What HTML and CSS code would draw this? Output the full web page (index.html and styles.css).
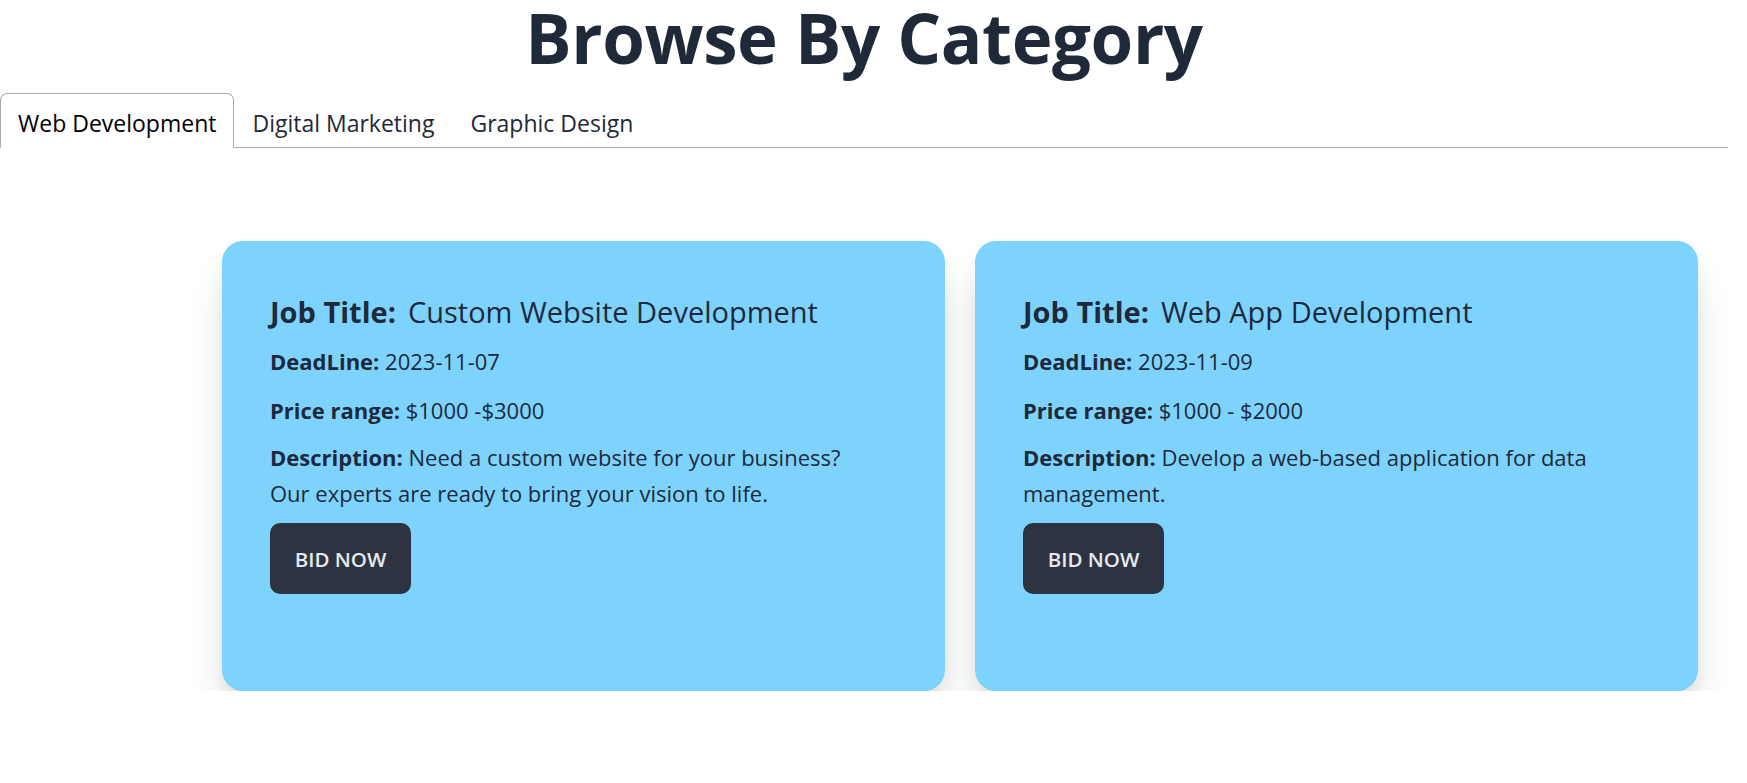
FILE: index.html
```html
<!DOCTYPE html>
<html lang="en">
<head>
<meta charset="utf-8">
<title>Browse By Category</title>
<link rel="stylesheet" href="styles.css">
</head>
<body>
<div class="page">
  <h1 class="heading">Browse By Category</h1>
  <ul class="tab-list">
    <li class="tab tab-active">Web Development</li>
    <li class="tab">Digital Marketing</li>
    <li class="tab">Graphic Design</li>
  </ul>
  <div class="cards">
    <div class="card">
      <h2 class="job-title"><span class="label">Job Title:</span><span class="job-name">Custom Website Development</span></h2>
      <p class="line"><span class="label">DeadLine:</span> 2023-11-07</p>
      <p class="line"><span class="label">Price range:</span> $1000 -$3000</p>
      <p class="line desc"><span class="label">Description:</span> Need a custom website for your business? Our experts are ready to bring your vision to life.</p>
      <button class="btn">BID NOW</button>
    </div>
    <div class="card">
      <h2 class="job-title"><span class="label">Job Title:</span><span class="job-name">Web App Development</span></h2>
      <p class="line"><span class="label">DeadLine:</span> 2023-11-09</p>
      <p class="line"><span class="label">Price range:</span> $1000 - $2000</p>
      <p class="line desc"><span class="label">Description:</span> Develop a web-based application for data management.</p>
      <button class="btn">BID NOW</button>
    </div>
  </div>
</div>
</body>
</html>
```
FILE: styles.css
```css
* { box-sizing: border-box; }
html, body { margin: 0; padding: 0; background: #ffffff; }
body {
  font-family: "Open Sans", "Noto Sans", "DejaVu Sans", sans-serif;
  color: #1f2937;
}
.page {
  width: 1728px;
  padding-top: 2px;
}
.heading {
  margin: 0;
  text-align: center;
  font-size: 69px;
  line-height: 70px;
  letter-spacing: -0.4px;
  font-weight: 700;
  color: #1f2937;
}
.tab-list {
  list-style: none;
  margin: 21px 0 0 0;
  padding: 0;
  display: flex;
  border-bottom: 1px solid #aaaaaa;
}
.tab {
  font-size: 23px;
  line-height: 37px;
  padding: 11px 17px 5px;
  border: 1px solid transparent;
  border-bottom: none;
  margin-bottom: -1px;
  color: #1f2937;
  cursor: pointer;
}
.tab-active {
  background: #ffffff;
  border-color: #aaaaaa;
  border-bottom: 1px solid #ffffff;
  border-radius: 7px 7px 0 0;
  color: #000000;
}
.cards {
  display: grid;
  grid-template-columns: 1fr 1fr;
  column-gap: 30px;
  padding: 93px 30px 0 222px;
}
.card {
  background: #7dd3fc;
  border-radius: 21px;
  padding: 51px 80px 97px 48px;
  display: flex;
  flex-direction: column;
  align-items: flex-start;
  gap: 13px;
  box-shadow: 0 28px 42px -12px rgba(0, 0, 0, 0.22), 0 6px 20px 0 rgba(0, 0, 0, 0.04);
  color: #1e293b;
}
.job-title {
  margin: 0 0 -1px 0;
  font-size: 29px;
  line-height: 39px;
  font-weight: 400;
}
.job-title .label { font-weight: 700; }
.job-name { margin-left: 12px; }
.line {
  margin: 0;
  font-size: 22px;
  line-height: 36px;
}
.desc { margin-top: -2px; }
.label { font-weight: 700; }
.btn {
  margin-top: -1px;
  width: 141px;
  height: 71px;
  border: none;
  border-radius: 10px;
  background: #2d3340;
  color: #e5e9f0;
  font-family: "Open Sans", "Noto Sans", sans-serif;
  font-size: 20.5px;
  font-weight: 600;
  cursor: pointer;
}
```
